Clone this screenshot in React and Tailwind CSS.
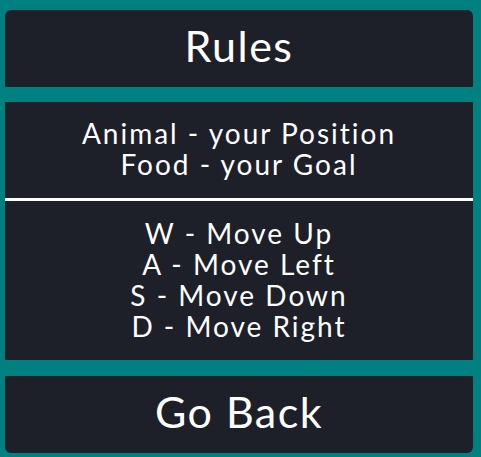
export default function App() {
  const font = { fontFamily: '"Lato", "Noto Sans", sans-serif' };
  return (
    <div className="w-[481px] h-[457px] bg-[#008080] px-[5px] pt-[10px] text-white overflow-hidden" style={font}>
      <div className="w-[468px] h-[77px] bg-[#1e2029] rounded-t-[6px] flex items-center justify-center text-[43px] tracking-[1.5px] leading-none pb-[6px]">
        Rules
      </div>
      <div className="mt-[15px] w-[468px] bg-[#1e2029] text-[28px] tracking-[2px] leading-[31px] text-center">
        <div className="h-[96px] flex flex-col justify-center pb-[2px]">
          <div>Animal - your Position</div>
          <div>Food - your Goal</div>
        </div>
        <div className="h-[3px] bg-white" />
        <div className="h-[159px] flex flex-col justify-center pb-[2px]">
          <div>W - Move Up</div>
          <div>A - Move Left</div>
          <div>S - Move Down</div>
          <div>D - Move Right</div>
        </div>
      </div>
      <div className="mt-[16px] w-[468px] h-[77px] bg-[#1e2029] rounded-b-[6px] flex items-center justify-center text-[43px] tracking-[1.5px] leading-none pb-[6px]">
        Go Back
      </div>
    </div>
  );
}
